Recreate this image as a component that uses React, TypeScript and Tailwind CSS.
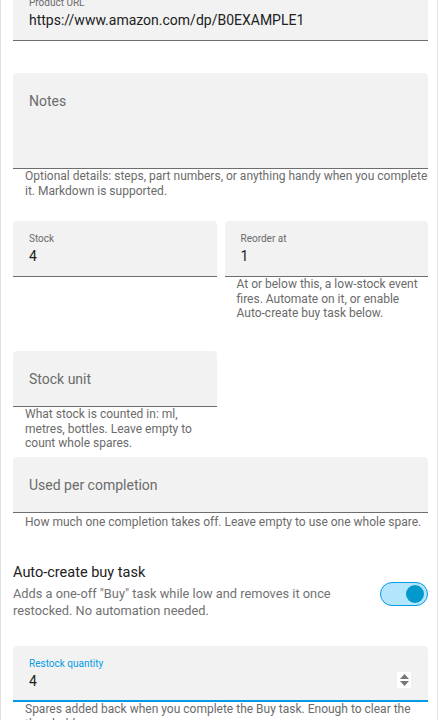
import type { ReactNode } from "react";

const FONT = "font-['Roboto','Noto_Sans',sans-serif]";

interface FieldProps {
  label: string;
  value?: string;
  height?: string;
  focused?: boolean;
  spinner?: boolean;
}

function Field({ label, value, height = "h-14", focused = false, spinner = false }: FieldProps) {
  const underline = focused ? "border-b-2 border-[#039be5]" : "border-b border-[#6e6e6e]";

  return (
    <div className={`relative flex ${height} flex-col rounded-t bg-[#f2f2f2] px-4 ${underline}`}>
      {value !== undefined ? (
        <>
          <span className={`mt-[10px] text-[10px] leading-4 ${focused ? "text-[#039be5]" : "text-[#6b6b6b]"}`}>{label}</span>
          <span className="-mt-[1px] text-sm leading-5 text-[#212121]">{value}</span>
        </>
      ) : (
        <span className="mt-[18px] text-sm leading-5 text-[#6b6b6b]">{label}</span>
      )}
      {spinner && (
        <div className="absolute right-[17px] top-[26px] flex h-4 w-[14px] flex-col items-center justify-center gap-[2px] bg-white">
          <svg width="9" height="5" viewBox="0 0 9 5">
            <path d="M0 5 L4.5 0 L9 5 Z" fill="#777" />
          </svg>
          <svg width="9" height="5" viewBox="0 0 9 5">
            <path d="M0 0 L4.5 5 L9 0 Z" fill="#777" />
          </svg>
        </div>
      )}
    </div>
  );
}

function Helper({ children, className = "" }: { children: ReactNode; className?: string }) {
  return <p className={`pl-3 text-xs leading-[14.5px] text-[#6b6b6b] ${className}`}>{children}</p>;
}

function Toggle() {
  return (
    <div className="mt-[21px] flex h-6 w-12 shrink-0 items-center justify-end rounded-full border border-[#039be5] bg-[#b3e5fc] pr-[3px]">
      <div className="size-[18px] rounded-full bg-[#0399cd]" />
    </div>
  );
}

export default function App() {
  return (
    <div className={`${FONT} min-h-[720px] w-[438px] overflow-hidden border-x border-[#e0e0e0] bg-white pl-3 pr-[9px]`}>
      <div className="-mt-[15px]">
        <Field label="Product URL" value="https://www.amazon.com/dp/B0EXAMPLE1" />
      </div>

      <div className="mt-8">
        <Field label="Notes" height="h-24" />
        <Helper>Optional details: steps, part numbers, or anything handy when you complete it. Markdown is supported.</Helper>
      </div>

      <div className="mt-[23px] grid grid-cols-2 gap-2">
        <div>
          <Field label="Stock" value="4" />
        </div>
        <div>
          <Field label="Reorder at" value="1" />
          <Helper>At or below this, a low-stock event fires. Automate on it, or enable Auto-create buy task below.</Helper>
        </div>
      </div>

      <div className="mt-[30.5px] grid grid-cols-2 gap-2">
        <div>
          <Field label="Stock unit" />
          <Helper>What stock is counted in: ml, metres, bottles. Leave empty to count whole spares.</Helper>
        </div>
        <div />
      </div>

      <div className="mt-[6.5px]">
        <Field label="Used per completion" />
        <Helper className="mt-[2px]">How much one completion takes off. Leave empty to use one whole spare.</Helper>
      </div>

      <div className="mt-[31px] flex items-start gap-4">
        <div className="flex-1">
          <p className="text-[14.5px] leading-6 text-[#212121]">Auto-create buy task</p>
          <p className="text-[12.8px] leading-[17.4px] text-[#727272]">
            Adds a one-off "Buy" task while low and removes it once restocked. No automation needed.
          </p>
        </div>
        <Toggle />
      </div>

      <div className="mt-[27px]">
        <Field label="Restock quantity" value="4" focused spinner />
        <Helper>Spares added back when you complete the Buy task. Enough to clear the threshold.</Helper>
      </div>
    </div>
  );
}
